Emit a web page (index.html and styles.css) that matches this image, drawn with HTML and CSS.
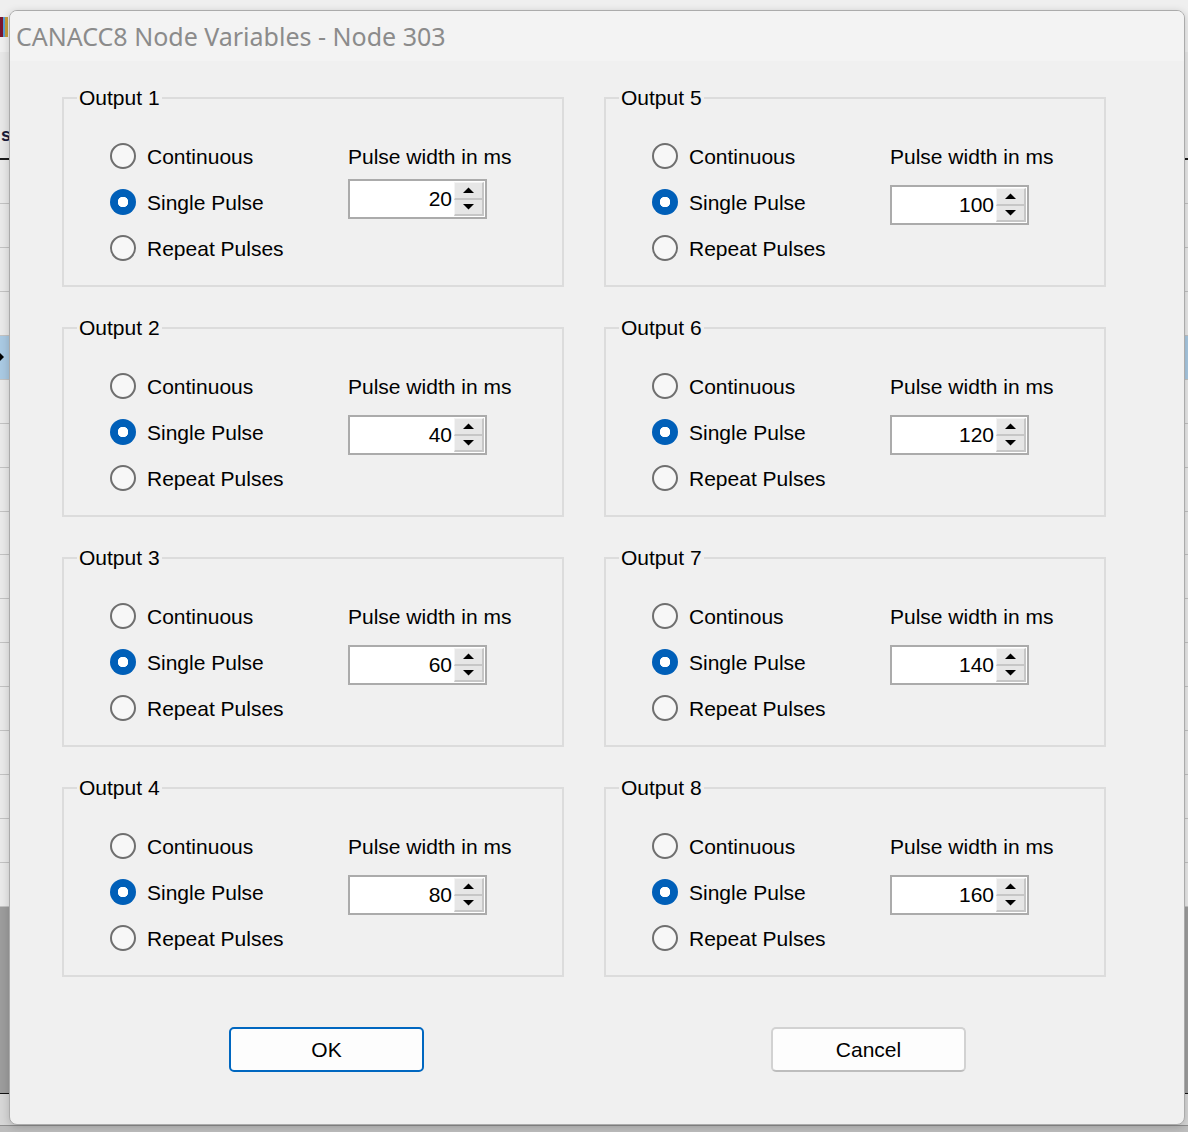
FILE: index.html
```html
<!DOCTYPE html>
<html lang="en">
<head>
<meta charset="utf-8">
<title>CANACC8 Node Variables - Node 303</title>
<link rel="stylesheet" href="styles.css">
</head>
<body>
<div class="app">
  <div class="app-head"><span class="app-icon"></span></div>
  <div class="app-toolbar"><span class="app-col">s</span></div>
  <div class="app-rows">
    <div class="app-row"></div><div class="app-row"></div><div class="app-row"></div><div class="app-row"></div>
    <div class="app-row selected"><span class="row-arrow"></span></div>
    <div class="app-row"></div><div class="app-row"></div><div class="app-row"></div><div class="app-row"></div>
    <div class="app-row"></div><div class="app-row"></div><div class="app-row"></div><div class="app-row"></div>
    <div class="app-row"></div><div class="app-row"></div><div class="app-row"></div><div class="app-row"></div>
  </div>
  <div class="app-gray"></div>
  <div class="app-line"></div>
  <div class="app-foot"></div>
  <div class="app-bottom"></div>
</div>

<div class="dialog">
  <div class="titlebar">CANACC8 Node Variables - Node 303</div>
  <div class="content">
    <div class="groups">
      <div class="group">
        <div class="legend">Output 1</div>
        <div class="group-body">
          <div class="radios">
            <div class="radio-row"><span class="radio"></span>Continuous</div>
            <div class="radio-row"><span class="radio checked"></span>Single Pulse</div>
            <div class="radio-row"><span class="radio"></span>Repeat Pulses</div>
          </div>
          <div class="pulse">
            <div class="pulse-label">Pulse width in ms</div>
            <div class="spinner raised">
              <span class="spin-value">20</span>
              <span class="spin-btns">
                <span class="spin-btn up"><svg width="11" height="7" viewBox="0 0 11 7"><polygon points="0,6 11,6 5.5,0.5" fill="#000"/></svg></span>
                <span class="spin-btn down"><svg width="11" height="7" viewBox="0 0 11 7"><polygon points="0,1 11,1 5.5,6.5" fill="#000"/></svg></span>
              </span>
            </div>
          </div>
        </div>
      </div>

      <div class="group">
        <div class="legend">Output 2</div>
        <div class="group-body">
          <div class="radios">
            <div class="radio-row"><span class="radio"></span>Continuous</div>
            <div class="radio-row"><span class="radio checked"></span>Single Pulse</div>
            <div class="radio-row"><span class="radio"></span>Repeat Pulses</div>
          </div>
          <div class="pulse">
            <div class="pulse-label">Pulse width in ms</div>
            <div class="spinner">
              <span class="spin-value">40</span>
              <span class="spin-btns">
                <span class="spin-btn up"><svg width="11" height="7" viewBox="0 0 11 7"><polygon points="0,6 11,6 5.5,0.5" fill="#000"/></svg></span>
                <span class="spin-btn down"><svg width="11" height="7" viewBox="0 0 11 7"><polygon points="0,1 11,1 5.5,6.5" fill="#000"/></svg></span>
              </span>
            </div>
          </div>
        </div>
      </div>

      <div class="group">
        <div class="legend">Output 3</div>
        <div class="group-body">
          <div class="radios">
            <div class="radio-row"><span class="radio"></span>Continuous</div>
            <div class="radio-row"><span class="radio checked"></span>Single Pulse</div>
            <div class="radio-row"><span class="radio"></span>Repeat Pulses</div>
          </div>
          <div class="pulse">
            <div class="pulse-label">Pulse width in ms</div>
            <div class="spinner">
              <span class="spin-value">60</span>
              <span class="spin-btns">
                <span class="spin-btn up"><svg width="11" height="7" viewBox="0 0 11 7"><polygon points="0,6 11,6 5.5,0.5" fill="#000"/></svg></span>
                <span class="spin-btn down"><svg width="11" height="7" viewBox="0 0 11 7"><polygon points="0,1 11,1 5.5,6.5" fill="#000"/></svg></span>
              </span>
            </div>
          </div>
        </div>
      </div>

      <div class="group">
        <div class="legend">Output 4</div>
        <div class="group-body">
          <div class="radios">
            <div class="radio-row"><span class="radio"></span>Continuous</div>
            <div class="radio-row"><span class="radio checked"></span>Single Pulse</div>
            <div class="radio-row"><span class="radio"></span>Repeat Pulses</div>
          </div>
          <div class="pulse">
            <div class="pulse-label">Pulse width in ms</div>
            <div class="spinner">
              <span class="spin-value">80</span>
              <span class="spin-btns">
                <span class="spin-btn up"><svg width="11" height="7" viewBox="0 0 11 7"><polygon points="0,6 11,6 5.5,0.5" fill="#000"/></svg></span>
                <span class="spin-btn down"><svg width="11" height="7" viewBox="0 0 11 7"><polygon points="0,1 11,1 5.5,6.5" fill="#000"/></svg></span>
              </span>
            </div>
          </div>
        </div>
      </div>

      <div class="group">
        <div class="legend">Output 5</div>
        <div class="group-body">
          <div class="radios">
            <div class="radio-row"><span class="radio"></span>Continuous</div>
            <div class="radio-row"><span class="radio checked"></span>Single Pulse</div>
            <div class="radio-row"><span class="radio"></span>Repeat Pulses</div>
          </div>
          <div class="pulse">
            <div class="pulse-label">Pulse width in ms</div>
            <div class="spinner">
              <span class="spin-value">100</span>
              <span class="spin-btns">
                <span class="spin-btn up"><svg width="11" height="7" viewBox="0 0 11 7"><polygon points="0,6 11,6 5.5,0.5" fill="#000"/></svg></span>
                <span class="spin-btn down"><svg width="11" height="7" viewBox="0 0 11 7"><polygon points="0,1 11,1 5.5,6.5" fill="#000"/></svg></span>
              </span>
            </div>
          </div>
        </div>
      </div>

      <div class="group">
        <div class="legend">Output 6</div>
        <div class="group-body">
          <div class="radios">
            <div class="radio-row"><span class="radio"></span>Continuous</div>
            <div class="radio-row"><span class="radio checked"></span>Single Pulse</div>
            <div class="radio-row"><span class="radio"></span>Repeat Pulses</div>
          </div>
          <div class="pulse">
            <div class="pulse-label">Pulse width in ms</div>
            <div class="spinner">
              <span class="spin-value">120</span>
              <span class="spin-btns">
                <span class="spin-btn up"><svg width="11" height="7" viewBox="0 0 11 7"><polygon points="0,6 11,6 5.5,0.5" fill="#000"/></svg></span>
                <span class="spin-btn down"><svg width="11" height="7" viewBox="0 0 11 7"><polygon points="0,1 11,1 5.5,6.5" fill="#000"/></svg></span>
              </span>
            </div>
          </div>
        </div>
      </div>

      <div class="group">
        <div class="legend">Output 7</div>
        <div class="group-body">
          <div class="radios">
            <div class="radio-row"><span class="radio"></span>Continous</div>
            <div class="radio-row"><span class="radio checked"></span>Single Pulse</div>
            <div class="radio-row"><span class="radio"></span>Repeat Pulses</div>
          </div>
          <div class="pulse">
            <div class="pulse-label">Pulse width in ms</div>
            <div class="spinner">
              <span class="spin-value">140</span>
              <span class="spin-btns">
                <span class="spin-btn up"><svg width="11" height="7" viewBox="0 0 11 7"><polygon points="0,6 11,6 5.5,0.5" fill="#000"/></svg></span>
                <span class="spin-btn down"><svg width="11" height="7" viewBox="0 0 11 7"><polygon points="0,1 11,1 5.5,6.5" fill="#000"/></svg></span>
              </span>
            </div>
          </div>
        </div>
      </div>

      <div class="group">
        <div class="legend">Output 8</div>
        <div class="group-body">
          <div class="radios">
            <div class="radio-row"><span class="radio"></span>Continuous</div>
            <div class="radio-row"><span class="radio checked"></span>Single Pulse</div>
            <div class="radio-row"><span class="radio"></span>Repeat Pulses</div>
          </div>
          <div class="pulse">
            <div class="pulse-label">Pulse width in ms</div>
            <div class="spinner">
              <span class="spin-value">160</span>
              <span class="spin-btns">
                <span class="spin-btn up"><svg width="11" height="7" viewBox="0 0 11 7"><polygon points="0,6 11,6 5.5,0.5" fill="#000"/></svg></span>
                <span class="spin-btn down"><svg width="11" height="7" viewBox="0 0 11 7"><polygon points="0,1 11,1 5.5,6.5" fill="#000"/></svg></span>
              </span>
            </div>
          </div>
        </div>
      </div>
    </div>

    <div class="actions">
      <button class="btn btn-primary" type="button">OK</button>
      <button class="btn" type="button">Cancel</button>
    </div>
  </div>
</div>
</body>
</html>
```

FILE: styles.css
```css
* { box-sizing: border-box; }

html, body {
  margin: 0;
  padding: 0;
}

body {
  width: 1188px;
  height: 1132px;
  position: relative;
  overflow: hidden;
  background: #bdbdbd;
  font-family: "Liberation Sans", Arial, sans-serif;
  color: #000;
}

/* ---------- application behind the dialog ---------- */
.app {
  display: flex;
  flex-direction: column;
  height: 1132px;
}

.app-head {
  height: 52px;
  background: #efefef;
  padding-top: 17px;
}

.app-icon {
  display: block;
  width: 8px;
  height: 20px;
  background: linear-gradient(90deg, #7a1530 0 3px, #5aa0d8 3px 5px, #c8a040 5px);
}

.app-toolbar {
  height: 108px;
  background: #e7e7e7;
  border-bottom: 2px solid #1a1a1a;
  display: flex;
  align-items: flex-end;
  padding-bottom: 12px;
  padding-left: 1px;
}

.app-col {
  display: block;
  font-size: 18px;
  font-weight: bold;
  line-height: 22px;
  color: #1b1b3a;
}

.app-rows {
  height: 747px;
  display: flex;
  flex-direction: column;
  background: #e9e9e9;
}

.app-row {
  flex: 1;
  border-bottom: 1px solid #c2c2c2;
  display: flex;
  align-items: center;
}

.app-row.selected {
  background: #a9c9e2;
}

.row-arrow {
  display: block;
  width: 0;
  height: 0;
  border-top: 4px solid transparent;
  border-bottom: 4px solid transparent;
  border-left: 4px solid #000;
}

.app-gray {
  height: 186px;
  background: #9c9c9c;
}

.app-line {
  height: 1px;
  background: #111;
}

.app-foot {
  height: 31px;
  background: #d6d6d6;
}

.app-bottom {
  height: 7px;
  background: #bdbdbd;
  border-top: 1px solid #8e8e8e;
}

/* ---------- dialog ---------- */
.dialog {
  position: absolute;
  left: 9px;
  top: 10px;
  width: 1176px;
  height: 1115px;
  background: #f0f0f0;
  border: 1px solid #ababab;
  border-radius: 8px;
  overflow: hidden;
  box-shadow: 0 2px 8px rgba(0, 0, 0, 0.18);
}

.titlebar {
  height: 50px;
  line-height: 50px;
  padding-left: 6px;
  background: #f3f3f3;
  font-family: "Noto Sans", "Open Sans", sans-serif;
  font-size: 25px;
  color: #8b8b8b;
  white-space: nowrap;
}

.content {
  padding: 36px 0 0 52px;
}

.groups {
  display: grid;
  grid-template-columns: 502px 502px;
  grid-template-rows: repeat(4, 190px);
  grid-auto-flow: column;
  column-gap: 40px;
  row-gap: 40px;
}

.group {
  border: 2px solid #dcdcdc;
  font-size: 21px;
}

.legend {
  width: fit-content;
  margin: -13px 0 0 13px;
  padding: 0 2px;
  line-height: 24px;
  background: #f0f0f0;
}

.group-body {
  display: flex;
  margin-top: 23px;
  padding-left: 46px;
}

.radios {
  width: 238px;
  display: flex;
  flex-direction: column;
}

.radio-row {
  height: 46px;
  display: flex;
  align-items: center;
  gap: 11px;
  padding-top: 1px;
  white-space: nowrap;
}

.radio {
  width: 26px;
  height: 26px;
  flex: none;
  margin-top: -1px;
  border-radius: 50%;
  border: 2px solid #6f6f6f;
  background: #f7f7f7;
}

.radio.checked {
  border: none;
  background: radial-gradient(circle, #ffffff 0 5px, #005fb8 5.5px);
}

.pulse {
  display: flex;
  flex-direction: column;
}

.pulse-label {
  height: 46px;
  line-height: 48px;
  white-space: nowrap;
}

.spinner {
  width: 139px;
  height: 40px;
  margin-top: 6px;
  border: 2px solid #ababab;
  background: #ffffff;
  display: flex;
}

.spinner.raised {
  margin-top: 0;
}

.spin-value {
  flex: 1;
  text-align: right;
  padding-right: 2px;
  line-height: 36px;
}

.spin-btns {
  width: 30px;
  margin: 1px 1px 1px 0;
  display: flex;
  flex-direction: column;
}

.spin-btn {
  flex: 1;
  display: flex;
  align-items: center;
  justify-content: center;
  background: #e6e6e6;
  border-right: 2px solid #c6c6c6;
  border-left: 1px solid #f4f4f4;
}

.spin-btn.up {
  border-bottom: 2px solid #c6c6c6;
  border-top: 1px solid #f4f4f4;
}

.spin-btn.down {
  border-bottom: 2px solid #c6c6c6;
}

.actions {
  display: grid;
  grid-template-columns: 502px 502px;
  column-gap: 40px;
  margin-top: 50px;
}

.btn {
  width: 195px;
  height: 45px;
  margin-left: 167px;
  font-family: "Liberation Sans", Arial, sans-serif;
  font-size: 21px;
  color: #000;
  background: #fdfdfd;
  border: 2px solid #d2d2d2;
  border-bottom-color: #bdbdbd;
  border-radius: 5px;
  padding: 0;
}

.btn-primary {
  border: 2px solid #0067c0;
}
```
